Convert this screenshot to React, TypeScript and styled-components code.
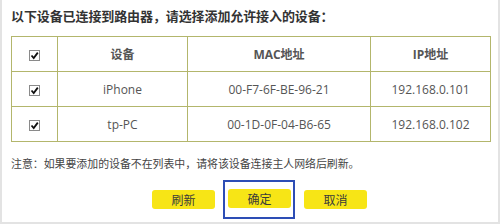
import React from "react";
import styled, { createGlobalStyle } from "styled-components";

const Global = createGlobalStyle`
  html, body { margin: 0; padding: 0; background: #e3e3e3; }
  body { font-family: "Open Sans", "Noto Sans CJK SC", sans-serif; }
`;

const Panel = styled.div`
  box-sizing: border-box;
  margin: 0 2px 0 2px;
  width: 496px;
  height: 222px;
  background: #fff;
  padding: 7px 8px 0 9px;
`;

const Title = styled.div`
  font-size: 13px;
  font-weight: 700;
  color: #333;
  line-height: 18px;
  letter-spacing: -0.1px;
  margin-bottom: 11px;
`;

const Table = styled.table`
  border-collapse: collapse;
  width: 479px;
  table-layout: fixed;
`;

const Cell = styled.td<{ $head?: boolean }>`
  border: 1px solid #b3b66c;
  height: 34px;
  padding: 0;
  text-align: center;
  vertical-align: middle;
  font-size: 12px;
  color: #555;
  font-weight: ${(p) => (p.$head ? 700 : 400)};
`;

const Box = styled.span`
  display: inline-block;
  box-sizing: border-box;
  width: 11px;
  height: 11px;
  border: 1px solid #8a8a8a;
  background: #fff;
  vertical-align: middle;
  position: relative;
  svg { position: absolute; left: 0; top: 0; }
`;

const Note = styled.div`
  font-size: 10.9px;
  color: #444;
  line-height: 16px;
  margin-top: 14px;
`;

const Buttons = styled.div`
  display: flex;
  align-items: center;
  padding-left: 141px;
  margin-top: 8px;
`;

const Btn = styled.button`
  box-sizing: border-box;
  width: 63px;
  height: 19px;
  border: none;
  border-radius: 3px;
  background: #f7e516;
  color: #3a3a3a;
  font-family: "Noto Sans CJK SC", sans-serif;
  font-size: 12px;
  padding: 0;
  line-height: 19px;
`;

const Focus = styled.div`
  border: 2px solid #2d4db5;
  padding: 7px 2px 9px 3px;
  margin: 0 9px 0 8px;
  display: flex;
`;

const Check = () => (
  <Box>
    <svg width="9" height="9" viewBox="0 0 9 9">
      <path d="M1.5 4.5 L3.7 7 L7.8 1.6" fill="none" stroke="#111" strokeWidth="1.8" />
    </svg>
  </Box>
);

const rows = [
  { name: "iPhone", mac: "00-F7-6F-BE-96-21", ip: "192.168.0.101" },
  { name: "tp-PC", mac: "00-1D-0F-04-B6-65", ip: "192.168.0.102" },
];

export default function App() {
  return (
    <>
      <Global />
      <Panel>
        <Title>以下设备已连接到路由器，请选择添加允许接入的设备：</Title>
        <Table>
          <colgroup>
            <col style={{ width: 46 }} />
            <col style={{ width: 130 }} />
            <col style={{ width: 183 }} />
            <col style={{ width: 120 }} />
          </colgroup>
          <tbody>
            <tr>
              <Cell $head><Check /></Cell>
              <Cell $head>设备</Cell>
              <Cell $head>MAC地址</Cell>
              <Cell $head>IP地址</Cell>
            </tr>
            {rows.map((r) => (
              <tr key={r.mac}>
                <Cell><Check /></Cell>
                <Cell>{r.name}</Cell>
                <Cell>{r.mac}</Cell>
                <Cell>{r.ip}</Cell>
              </tr>
            ))}
          </tbody>
        </Table>
        <Note>注意：如果要添加的设备不在列表中，请将该设备连接主人网络后刷新。</Note>
        <Buttons>
          <Btn>刷新</Btn>
          <Focus><Btn>确定</Btn></Focus>
          <Btn>取消</Btn>
        </Buttons>
      </Panel>
    </>
  );
}
